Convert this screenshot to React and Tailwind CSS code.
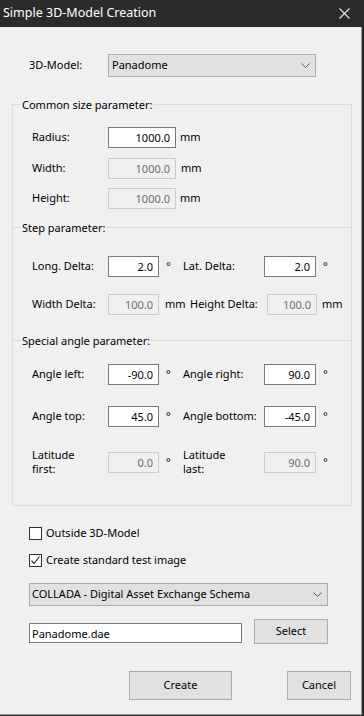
import React from 'react';

const Box = ({ value, w, disabled }) => {
  return (
    <input
      readOnly
      value={value}
      className={`${w} h-[21px] border px-[5px] text-right text-[11px] outline-none ${
        disabled ? 'border-[#cccccc] bg-[#f0f0f0] text-[#6d6d6d]' : 'border-[#7a7a7a] bg-white text-black'
      }`}
    />
  );
};

const Heading = ({ children, first }) => {
  return (
    <div className={`flex h-[17px] items-center ${first ? '-mt-[8px]' : ''}`}>
      <div className="h-px w-[8px] bg-[#dcdcdc]" />
      <span className="px-[1px] leading-[17px]">{children}</span>
      <div className="h-px flex-1 bg-[#dcdcdc]" />
    </div>
  );
};

const Chevron = () => (
  <svg width="9" height="5" viewBox="0 0 9 5">
    <path d="M0.5 0.5 L4.5 4.5 L8.5 0.5" fill="none" stroke="#555555" strokeWidth="1" />
  </svg>
);

const Combo = ({ children, w, pl }) => {
  return (
    <div className={`flex h-[23px] ${w} items-center justify-between border border-[#adadad] bg-[#e1e1e1] ${pl} pr-[5px]`}>
      <span>{children}</span>
      <Chevron />
    </div>
  );
};

const Button = ({ children, w, h }) => {
  return (
    <button className={`${w} ${h} border border-[#adadad] bg-[#e1e1e1] text-[11px] text-black`}>
      {children}
    </button>
  );
};

const App = () => {
  return (
    <div className="flex h-[716px] w-[364px] flex-col bg-[#2b2b2b] pb-[1px] pr-[2px] font-['Noto_Sans',sans-serif] text-[11px] text-black">
      {/* title bar */}
      <div className="flex h-[27px] shrink-0 items-center justify-between pl-[3px] pr-[12px]">
        <span className="text-[12.5px] text-white">Simple 3D-Model Creation</span>
        <svg width="11" height="11" viewBox="0 0 11 11">
          <path d="M0.5 0.5 L10.5 10.5 M10.5 0.5 L0.5 10.5" stroke="#e6e6e6" strokeWidth="1.1" fill="none" />
        </svg>
      </div>

      <div className="flex flex-1 flex-col border-b border-r border-[#9a9a9a] bg-[#f0f0f0]">
        {/* model */}
        <div className="mt-[27px] flex h-[23px] items-center pl-[29px]">
          <span className="w-[79px]">3D-Model:</span>
          <Combo w="w-[208px]" pl="pl-[3px]">Panadome</Combo>
        </div>

        {/* parameter groups */}
        <div className="ml-[12px] mt-[27px] flex w-[340px] flex-col border-x border-b border-[#dcdcdc] pb-[29px]">
          <Heading first>Common size parameter:</Heading>

          <div className="mt-[14px] flex h-[21px] items-center pl-[19px]">
            <span className="w-[76px]">Radius:</span>
            <Box value="1000.0" w="w-[68px]" />
            <span className="ml-[4px]">mm</span>
          </div>
          <div className="mt-[10px] flex h-[21px] items-center pl-[19px]">
            <span className="w-[76px]">Width:</span>
            <Box value="1000.0" w="w-[68px]" disabled />
            <span className="ml-[5px]">mm</span>
          </div>
          <div className="mt-[9px] flex h-[21px] items-center pl-[19px]">
            <span className="w-[76px]">Height:</span>
            <Box value="1000.0" w="w-[68px]" disabled />
            <span className="ml-[4px]">mm</span>
          </div>

          <div className="mt-[10px]">
            <Heading>Step parameter:</Heading>
          </div>

          <div className="mt-[20px] flex h-[21px] items-center pl-[19px]">
            <span className="w-[76px]">Long. Delta:</span>
            <Box value="2.0" w="w-[51px]" />
            <span className="w-[24px] pl-[7px]">°</span>
            <span className="w-[81px]">Lat. Delta:</span>
            <Box value="2.0" w="w-[52px]" />
            <span className="ml-[7px]">°</span>
          </div>
          <div className="mt-[17px] flex h-[21px] items-center pl-[19px]">
            <span className="w-[76px]">Width Delta:</span>
            <Box value="100.0" w="w-[51px]" disabled />
            <span className="w-[31px] pl-[6px]">mm</span>
            <span className="w-[77px]">Height Delta:</span>
            <Box value="100.0" w="w-[50px]" disabled />
            <span className="ml-[5px]">mm</span>
          </div>

          <div className="mt-[17px]">
            <Heading>Special angle parameter:</Heading>
          </div>

          <div className="mt-[15px] flex h-[21px] items-center pl-[19px]">
            <span className="w-[76px]">Angle left:</span>
            <Box value="-90.0" w="w-[51px]" />
            <span className="w-[24px] pl-[7px]">°</span>
            <span className="w-[81px]">Angle right:</span>
            <Box value="90.0" w="w-[52px]" />
            <span className="ml-[7px]">°</span>
          </div>
          <div className="mt-[21px] flex h-[21px] items-center pl-[19px]">
            <span className="w-[76px]">Angle top:</span>
            <Box value="45.0" w="w-[51px]" />
            <span className="w-[24px] pl-[7px]">°</span>
            <span className="w-[81px]">Angle bottom:</span>
            <Box value="-45.0" w="w-[52px]" />
            <span className="ml-[7px]">°</span>
          </div>
          <div className="mt-[21px] flex h-[28px] items-center pl-[19px]">
            <span className="w-[76px] leading-[14px]">
              Latitude
              <br />
              first:
            </span>
            <Box value="0.0" w="w-[51px]" disabled />
            <span className="w-[24px] pl-[7px]">°</span>
            <span className="w-[81px] leading-[14px]">
              Latitude
              <br />
              last:
            </span>
            <Box value="90.0" w="w-[52px]" disabled />
            <span className="ml-[7px]">°</span>
          </div>
        </div>

        {/* options */}
        <div className="mt-[21px] flex h-[13px] items-center pl-[29px]">
          <span className="h-[13px] w-[13px] shrink-0 border border-[#333333] bg-white" />
          <span className="ml-[4px]">Outside 3D-Model</span>
        </div>
        <div className="mt-[14px] flex h-[13px] items-center pl-[29px]">
          <span className="flex h-[13px] w-[13px] shrink-0 items-center justify-center border border-[#333333] bg-white">
            <svg width="11" height="11" viewBox="0 0 11 11">
              <path d="M1.5 5.5 L4 8.5 L9.5 1.5" fill="none" stroke="#333333" strokeWidth="1.2" />
            </svg>
          </span>
          <span className="ml-[4px]">Create standard test image</span>
        </div>

        <div className="mt-[16px] pl-[29px]">
          <Combo w="w-[299px]" pl="pl-[2px]">COLLADA - Digital Asset Exchange Schema</Combo>
        </div>

        <div className="mt-[13px] flex h-[25px] items-start pl-[29px]">
          <input
            readOnly
            value="Panadome.dae"
            className="mt-[4px] h-[20px] w-[213px] border border-[#7a7a7a] bg-white px-[2px] text-[11px] outline-none"
          />
          <div className="ml-[12px]">
            <Button w="w-[74px]" h="h-[25px]">Select</Button>
          </div>
        </div>

        <div className="mt-[27px] flex pl-[129px]">
          <Button w="w-[103px]" h="h-[29px]">Create</Button>
          <div className="ml-[55px]">
            <Button w="w-[64px]" h="h-[29px]">Cancel</Button>
          </div>
        </div>
      </div>
    </div>
  );
};

export default App;
